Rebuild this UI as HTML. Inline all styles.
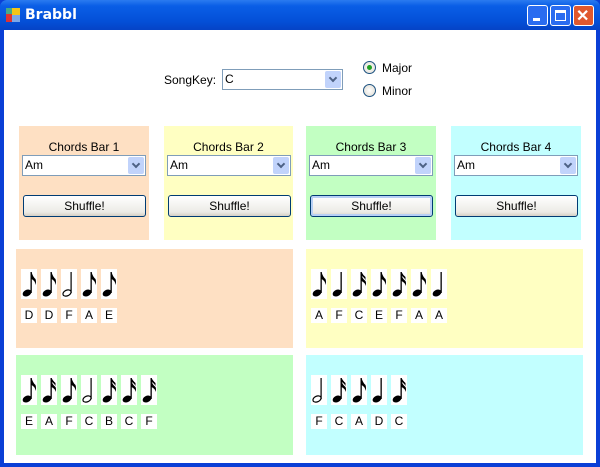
<!DOCTYPE html><html><head><style>
body{margin:0;width:600px;height:467px;overflow:hidden;font-family:"Liberation Sans",sans-serif;font-size:12px;}
.win{position:absolute;left:0;top:0;width:600px;height:467px;background:#0a3fd6;}
.tb{position:absolute;left:0;top:0;width:600px;height:30px;background:linear-gradient(#2b7bf0,#0a5ee6 20%,#0450d8 70%,#0543c6);border-radius:7px 7px 0 0;}
.title{position:absolute;left:25px;top:7px;color:#fff;font:bold 14px "DejaVu Sans",sans-serif;}
.client{position:absolute;left:4px;top:30px;width:592px;height:433px;background:#fff;}
.p{position:absolute;}
.cb{position:absolute;height:21px;border:1px solid #7f9db9;background:#fff;box-sizing:border-box;font-size:12px;line-height:19px;padding-left:2px;}
.cb i{position:absolute;right:1px;top:1px;width:16px;height:17px;background:#c1d3fb;border-radius:2px;}
.cb i:after{content:"";position:absolute;left:5px;top:4px;width:4px;height:4px;border-right:2px solid #4d6185;border-bottom:2px solid #4d6185;transform:rotate(45deg);}
.btn{position:absolute;height:22px;border:1px solid #003c74;border-radius:3px;background:linear-gradient(#fff,#ecebe6 80%,#d6d0c5);box-sizing:border-box;text-align:center;line-height:20px;}
.lbl{position:absolute;text-align:center;font-size:12px;}
.n{position:absolute;top:20px;width:16px;height:30px;background:#fff;}
.l{position:absolute;top:59px;width:16px;height:15px;background:#fff;text-align:center;line-height:15px;font-size:12px;}
.rad{position:absolute;width:11px;height:11px;border:1px solid #1c5180;border-radius:50%;background:radial-gradient(#fff,#dcd9cf);}
.wb{position:absolute;top:5px;width:21px;height:21px;border:1px solid #fff;border-radius:3px;background:#2a6cf0;box-sizing:border-box;}
</style></head><body>
<svg width="0" height="0" style="position:absolute">
<defs>
<g id="head"><ellipse cx="6" cy="24" rx="4.6" ry="3.2" transform="rotate(-25 6 24)" fill="#000"/></g>
<g id="q"><use href="#head"/><rect x="9.5" y="3" width="1.3" height="21" fill="#000"/></g>
<g id="e"><use href="#q"/><path d="M10.5 3 Q12 8 14.5 10 Q15.5 13 14.5 16 Q14.5 12 10.5 10Z" fill="#000"/></g>
<g id="s"><use href="#q"/><path d="M10.5 3 Q12 6 14.5 8 L14.5 11 Q13 8 10.5 7Z M10.5 7 Q12 10 14.5 12 Q15.5 14 14.5 17 Q14.5 14 10.5 12Z" fill="#000"/></g>
<g id="h"><ellipse cx="6" cy="24" rx="4.3" ry="2.8" transform="rotate(-25 6 24)" fill="none" stroke="#000" stroke-width="1.2"/><rect x="9.5" y="3" width="1.2" height="21" fill="#000"/></g>
</defs></svg>
<div class="win">
<div class="tb">
<svg style="position:absolute;left:6px;top:8px" width="14" height="14"><rect x="0" y="6" width="6" height="8" fill="#d33"/><rect x="6" y="0" width="8" height="7" fill="#f5c518"/><rect x="6" y="7" width="8" height="7" fill="#7aa7e8"/><rect x="0" y="0" width="6" height="6" fill="#4a8"/></svg>
<div class="title">Brabbl</div>
<div class="wb" style="left:527px"><div style="position:absolute;left:5px;top:12px;width:7px;height:3px;background:#fff"></div></div>
<div class="wb" style="left:550px"><div style="position:absolute;left:4px;top:4px;width:11px;height:11px;border:1px solid #fff;border-top:3px solid #fff;box-sizing:border-box"></div></div>
<div class="wb" style="left:573px;background:#e0582e"><div style="position:absolute;left:2px;top:0;color:#fff;font:bold 16px sans-serif">✕</div></div>
</div>
<div class="client">
<div class="p" style="left:160px;top:43px">SongKey:</div>
<div class="cb" style="left:218px;top:39px;width:121px">C<i></i></div>
<div class="rad" style="left:359px;top:31px"><div style="position:absolute;left:3px;top:3px;width:5px;height:5px;border-radius:50%;background:#21a121"></div></div>
<div class="p" style="left:378px;top:31px">Major</div>
<div class="rad" style="left:359px;top:54px"></div>
<div class="p" style="left:378px;top:54px">Minor</div>

<div class="p" style="left:15px;top:96px;width:130px;height:114px;background:#fee0c3"></div>
<div class="p" style="left:160px;top:96px;width:129px;height:114px;background:#ffffc2"></div>
<div class="p" style="left:302px;top:96px;width:130px;height:114px;background:#c2ffc2"></div>
<div class="p" style="left:447px;top:96px;width:130px;height:114px;background:#c2ffff"></div>

<div class="lbl" style="left:15px;top:110px;width:130px">Chords Bar 1</div>
<div class="lbl" style="left:160px;top:110px;width:129px">Chords Bar 2</div>
<div class="lbl" style="left:302px;top:110px;width:130px">Chords Bar 3</div>
<div class="lbl" style="left:447px;top:110px;width:130px">Chords Bar 4</div>
<div class="cb" style="left:18px;top:125px;width:124px">Am<i></i></div>
<div class="cb" style="left:163px;top:125px;width:124px">Am<i></i></div>
<div class="cb" style="left:305px;top:125px;width:124px">Am<i></i></div>
<div class="cb" style="left:450px;top:125px;width:124px">Am<i></i></div>
<div class="btn" style="left:19px;top:165px;width:123px">Shuffle!</div>
<div class="btn" style="left:164px;top:165px;width:123px">Shuffle!</div>
<div class="btn" style="left:306px;top:165px;width:123px;box-shadow:inset 0 0 0 2px #b8d0f5">Shuffle!</div>
<div class="btn" style="left:451px;top:165px;width:123px">Shuffle!</div>

<div class="p" style="left:12px;top:219px;width:277px;height:99px;background:#fee0c3">
<svg class="n" style="left:5px"><use href="#e"/></svg><svg class="n" style="left:25px"><use href="#e"/></svg><svg class="n" style="left:45px"><use href="#h"/></svg><svg class="n" style="left:65px"><use href="#e"/></svg><svg class="n" style="left:85px"><use href="#e"/></svg>
<div class="l" style="left:5px">D</div><div class="l" style="left:25px">D</div><div class="l" style="left:45px">F</div><div class="l" style="left:65px">A</div><div class="l" style="left:85px">E</div>
</div>
<div class="p" style="left:302px;top:219px;width:277px;height:99px;background:#ffffc2">
<svg class="n" style="left:5px"><use href="#e"/></svg><svg class="n" style="left:25px"><use href="#q"/></svg><svg class="n" style="left:45px"><use href="#s"/></svg><svg class="n" style="left:65px"><use href="#e"/></svg><svg class="n" style="left:85px"><use href="#s"/></svg><svg class="n" style="left:105px"><use href="#e"/></svg><svg class="n" style="left:125px"><use href="#q"/></svg>
<div class="l" style="left:5px">A</div><div class="l" style="left:25px">F</div><div class="l" style="left:45px">C</div><div class="l" style="left:65px">E</div><div class="l" style="left:85px">F</div><div class="l" style="left:105px">A</div><div class="l" style="left:125px">A</div>
</div>
<div class="p" style="left:12px;top:325px;width:277px;height:100px;background:#c2ffc2">
<svg class="n" style="left:5px"><use href="#e"/></svg><svg class="n" style="left:25px"><use href="#s"/></svg><svg class="n" style="left:45px"><use href="#e"/></svg><svg class="n" style="left:65px"><use href="#h"/></svg><svg class="n" style="left:85px"><use href="#s"/></svg><svg class="n" style="left:105px"><use href="#s"/></svg><svg class="n" style="left:125px"><use href="#s"/></svg>
<div class="l" style="left:5px">E</div><div class="l" style="left:25px">A</div><div class="l" style="left:45px">F</div><div class="l" style="left:65px">C</div><div class="l" style="left:85px">B</div><div class="l" style="left:105px">C</div><div class="l" style="left:125px">F</div>
</div>
<div class="p" style="left:302px;top:325px;width:277px;height:100px;background:#c2ffff">
<svg class="n" style="left:5px"><use href="#h"/></svg><svg class="n" style="left:25px"><use href="#s"/></svg><svg class="n" style="left:45px"><use href="#e"/></svg><svg class="n" style="left:65px"><use href="#q"/></svg><svg class="n" style="left:85px"><use href="#s"/></svg>
<div class="l" style="left:5px">F</div><div class="l" style="left:25px">C</div><div class="l" style="left:45px">A</div><div class="l" style="left:65px">D</div><div class="l" style="left:85px">C</div>
</div>
</div>
</div>
</body></html>
